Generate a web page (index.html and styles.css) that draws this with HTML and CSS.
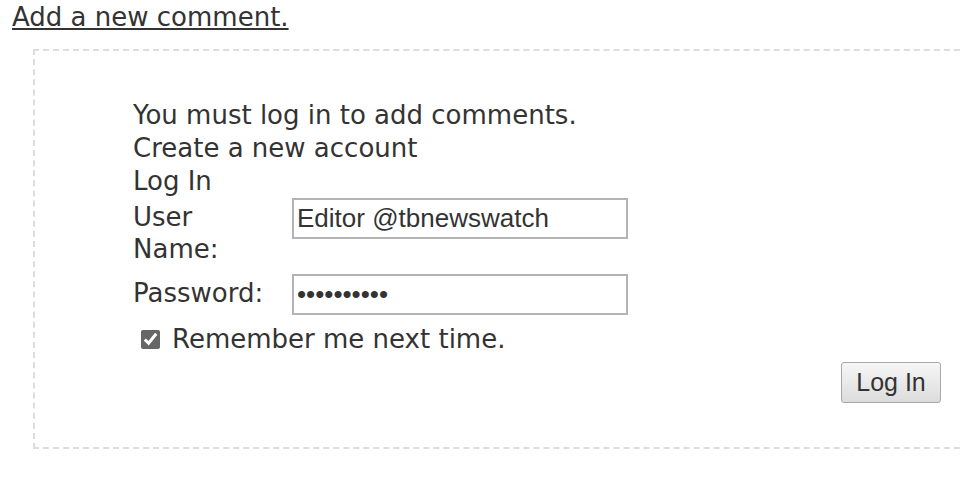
FILE: index.html
```html
<!DOCTYPE html>
<html lang="en">
<head>
    <meta charset="UTF-8">
    <title>Add a new comment</title>
    <link rel="stylesheet" href="styles.css">
</head>
<body>
    <a href="#" class="add-link">Add a new comment.</a>

    <div class="comment-box">
        <p class="notice">You must log in to add comments.</p>
        <p class="notice">Create a new account</p>
        <p class="notice">Log In</p>

        <form class="login-form" onsubmit="return false">
            <div class="field">
                <label for="user">User Name:</label>
                <input type="text" id="user" value="Editor @tbnewswatch">
            </div>
            <div class="field">
                <label for="pass">Password:</label>
                <input type="password" id="pass" value="abcdefghij">
            </div>
            <label class="remember">
                <input type="checkbox" checked>
                Remember me next time.
            </label>
            <div class="actions">
                <button type="submit">Log In</button>
            </div>
        </form>
    </div>
</body>
</html>
```

FILE: styles.css
```css
* {
    box-sizing: border-box;
    margin: 0;
    padding: 0;
}

html, body {
    overflow: hidden;
}

body {
    font-family: 'DejaVu Sans', Verdana, sans-serif;
    font-size: 26px;
    color: #333;
    background: #fff;
    padding: 0 0 0 12px;
}

.add-link {
    display: inline-block;
    color: #333;
    line-height: 34px;
    text-decoration: underline;
}

.comment-box {
    margin: 15px -200px 0 21px;
    border: 2px dashed #ddd;
    padding: 48px 0 44px 98px;
}

.notice {
    line-height: 33px;
}

.login-form {
    width: 808px;
}

.field {
    display: flex;
    align-items: flex-start;
    margin-bottom: 9px;
}

.field label {
    flex: 0 0 140px;
    margin-right: 19px;
    line-height: 32px;
    margin-top: 3px;
}

.field input {
    flex: 0 0 auto;
    width: 336px;
    min-width: 0;
    height: 41px;
    border: 2px solid #b4b4b4;
    font-family: 'Liberation Sans', Arial, sans-serif;
    font-size: 26px;
    color: #333;
    padding: 0 3px;
}

.remember {
    display: flex;
    align-items: center;
    gap: 12px;
    margin-top: 4px;
    margin-left: 8px;
    line-height: 30px;
}

.remember input {
    width: 19px;
    height: 19px;
    accent-color: #666;
}

.actions {
    display: flex;
    justify-content: flex-end;
    margin-top: 8px;
}

button {
    width: 100px;
    height: 41px;
    border: 1px solid #a8a8a8;
    border-radius: 3px;
    background: linear-gradient(#f6f6f6, #dcdcdc);
    font-family: 'Liberation Sans', Arial, sans-serif;
    font-size: 25px;
    color: #333;
}
```
